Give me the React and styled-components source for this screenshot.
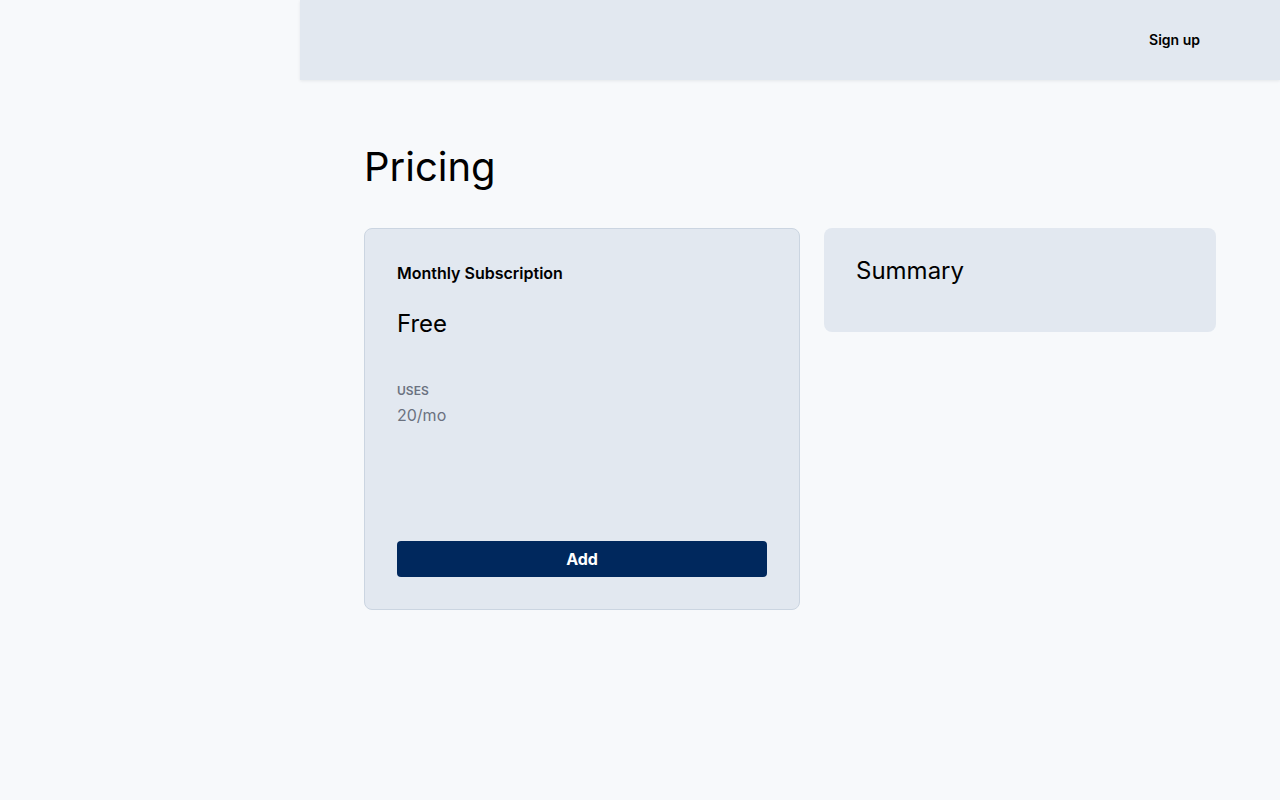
import React from 'react';
import styled, { createGlobalStyle } from 'styled-components';

const GlobalStyle = createGlobalStyle`
  html, body {
    margin: 0;
    padding: 0;
    background: #f7f9fb;
    font-family: Inter, "Noto Sans", sans-serif;
    color: #000;
  }
  * {
    box-sizing: border-box;
  }
`;

const App = () => {
  return (
    <>
      <GlobalStyle />
      <Layout>
        <Sidebar />
        <Body>
          <Header>
            <HeaderLink>Sign up</HeaderLink>
          </Header>
          <Main>
            <PageTitle>Pricing</PageTitle>
            <Columns>
              <PlanCard>
                <PlanName>Monthly Subscription</PlanName>
                <Price>Free</Price>
                <FeatureLabel>Uses</FeatureLabel>
                <FeatureValue>20/mo</FeatureValue>
                <AddButton>Add</AddButton>
              </PlanCard>
              <SummaryCard>
                <SummaryTitle>Summary</SummaryTitle>
              </SummaryCard>
            </Columns>
          </Main>
        </Body>
      </Layout>
    </>
  );
};

export default App;

const Layout = styled.div`
  display: flex;
  min-height: 100vh;
`;

const Sidebar = styled.aside`
  width: 300px;
  flex-shrink: 0;
`;

const Body = styled.div`
  flex: 1;
  display: flex;
  flex-direction: column;
`;

const Header = styled.header`
  height: 80px;
  background: #e2e8f0;
  box-shadow: 0 1px 3px rgba(15, 23, 42, 0.08);
  display: flex;
  align-items: center;
  justify-content: flex-end;
  padding: 0 80px 2px;
`;

const HeaderLink = styled.a`
  font-size: 14px;
  font-weight: 600;
  color: #000;
  cursor: pointer;
`;

const Main = styled.main`
  padding: 60px 64px;
`;

const PageTitle = styled.h1`
  margin: 0 0 34px;
  font-size: 40px;
  font-weight: 400;
  line-height: 54px;
`;

const Columns = styled.div`
  display: grid;
  grid-template-columns: 436px 1fr;
  gap: 24px;
  align-items: start;
`;

const PlanCard = styled.div`
  background: #e2e8f0;
  border: 1px solid #cbd5e1;
  border-radius: 8px;
  padding: 32px;
  height: 382px;
  display: flex;
  flex-direction: column;
`;

const PlanName = styled.div`
  font-size: 16px;
  font-weight: 600;
  line-height: 24px;
`;

const Price = styled.div`
  margin-top: 25px;
  font-size: 24px;
  line-height: 28px;
`;

const FeatureLabel = styled.div`
  margin-top: 46px;
  font-size: 12px;
  font-weight: 600;
  text-transform: uppercase;
  color: #6b7280;
  line-height: 14px;
`;

const FeatureValue = styled.div`
  margin-top: 7px;
  font-size: 16px;
  color: #6b7280;
  line-height: 20px;
`;

const AddButton = styled.button`
  margin-top: auto;
  height: 36px;
  width: 100%;
  border: none;
  border-radius: 4px;
  background: #00285d;
  color: #fff;
  font-family: inherit;
  font-size: 16px;
  font-weight: 700;
  cursor: pointer;
`;

const SummaryCard = styled.div`
  background: #e2e8f0;
  border-radius: 8px;
  padding: 27px 32px 45px;
`;

const SummaryTitle = styled.h2`
  margin: 0;
  font-size: 24px;
  font-weight: 400;
  line-height: 32px;
`;
